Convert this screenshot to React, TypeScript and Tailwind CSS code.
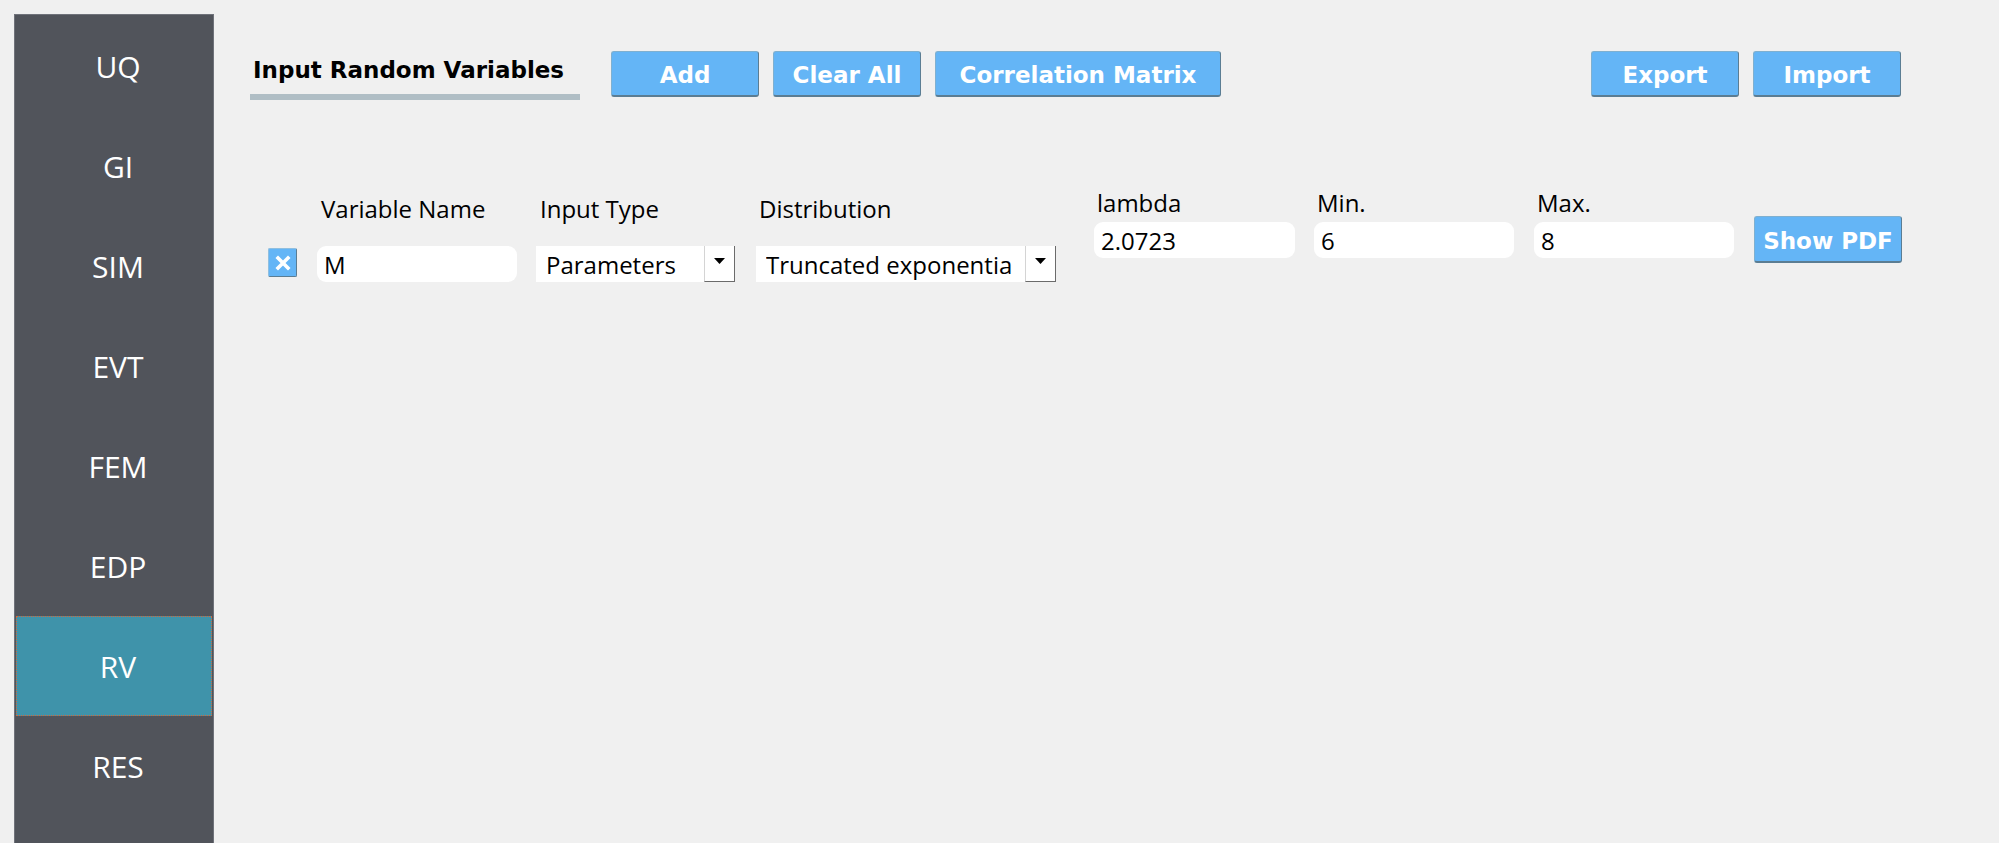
import React from 'react';

const NAV = ['UQ', 'GI', 'SIM', 'EVT', 'FEM', 'EDP', 'RV', 'RES'];

const BlueButton: React.FC<{ label: string; className?: string }> = ({ label, className = '' }) => (
  <button
    className={`h-[46px] w-[148px] shrink-0 rounded-[3px] border border-[#7fb0d0] border-r-[#5b7d93] border-b-2 border-b-[#5b7d93] bg-[#64b5f6] pt-[3px] font-['DejaVu_Sans',sans-serif] text-[23px] font-bold leading-[28px] text-white ${className}`}
  >
    {label}
  </button>
);

const TextField: React.FC<{ value: string; w: string }> = ({ value, w }) => (
  <div className={`${w} h-[36px] rounded-[9px] bg-white pl-[7px] pt-[5px] text-[24px] leading-[28px] text-black`}>
    {value}
  </div>
);

// qt-style combo box: value is clipped before the drop-down button
const Combo: React.FC<{ value: string; w: string }> = ({ value, w }) => (
  <div className={`${w} flex h-[36px] bg-white`}>
    <div className="min-w-0 flex-1 pl-[10px] pr-[12px] pt-[2px]">
      <div className="overflow-hidden whitespace-nowrap text-[24px] leading-[33px] text-black">{value}</div>
    </div>
    <div className="flex w-[31px] shrink-0 justify-center border-r border-b border-l border-r-[#6b6b6b] border-b-[#6b6b6b] border-l-[#d4d4d4] pt-[12px]">
      <svg width="11" height="6" viewBox="0 0 11 6">
        <path d="M0 0 H11 L5.5 6 Z" fill="#000" />
      </svg>
    </div>
  </div>
);

const Labeled: React.FC<{ label: string; gap: string; children: React.ReactNode }> = ({ label, gap, children }) => (
  <div className="flex flex-col">
    <div className="whitespace-nowrap pl-[3px] text-[24px] leading-[28px] text-black">{label}</div>
    <div className={gap}>{children}</div>
  </div>
);

export default function App() {
  return (
    <div className="flex h-[843px] w-full overflow-hidden bg-[#f0f0f0] pl-[14px] pt-[14px] font-['Open_Sans',sans-serif]">
      <nav className="flex w-[200px] shrink-0 flex-col border border-b-0 border-[#6f727a] bg-[#51545b] p-[1px]">
        {NAV.map((n) => (
          <div
            key={n}
            className={`flex h-[100px] items-center justify-center pl-[8px] text-[30px] text-white ${
              n === 'RV' ? 'bg-[#3f93aa] outline-1 outline-dotted outline-[#cf6a3c] -outline-offset-1' : ''
            }`}
          >
            {n}
          </div>
        ))}
      </nav>

      <main className="flex flex-1 flex-col pl-[36px] pr-[96px] pt-[37px]">
        <div className="flex items-start">
          <div className="flex w-[330px] shrink-0 flex-col pt-[5px]">
            <div className="pl-[3px] font-['DejaVu_Sans',sans-serif] text-[23px] font-bold leading-[28px] text-black">
              Input Random Variables
            </div>
            <div className="mt-[10px] h-[6px] bg-[#b0bec5]" />
          </div>
          <div className="ml-[31px] flex shrink-0 gap-[14px]">
            <BlueButton label="Add" />
            <BlueButton label="Clear All" />
            <BlueButton label="Correlation Matrix" className="w-[286px]" />
          </div>
          <div className="flex-1" />
          <div className="mr-[2px] flex shrink-0 gap-[14px]">
            <BlueButton label="Export" />
            <BlueButton label="Import" />
          </div>
        </div>

        <div className="mt-[89px] flex items-start">
          <div className="ml-[18px] mt-[59px] flex h-[29px] w-[29px] shrink-0 items-center justify-center rounded-[2px] border border-[#8fbfe0] border-r-[#5b7d93] border-b-[#5b7d93] bg-[#64b5f6]">
            <svg width="16" height="16" viewBox="0 0 16 16">
              <path d="M3 3 L13 13 M13 3 L3 13" stroke="#fff" strokeWidth="3.6" strokeLinecap="square" />
            </svg>
          </div>

          <div className="ml-[21px] mt-[6px] shrink-0">
            <Labeled label="Variable Name" gap="mt-[23px] -ml-[1px]">
              <TextField value="M" w="w-[200px]" />
            </Labeled>
          </div>
          <div className="ml-[20px] mt-[6px] shrink-0">
            <Labeled label="Input Type" gap="mt-[23px] -ml-[1px]">
              <Combo value="Parameters" w="w-[199px]" />
            </Labeled>
          </div>
          <div className="ml-[21px] mt-[6px] shrink-0">
            <Labeled label="Distribution" gap="mt-[23px]">
              <Combo value="Truncated exponential" w="w-[300px]" />
            </Labeled>
          </div>

          <div className="ml-[38px] shrink-0">
            <Labeled label="lambda" gap="mt-[5px]">
              <TextField value="2.0723" w="w-[201px]" />
            </Labeled>
          </div>
          <div className="ml-[19px] shrink-0">
            <Labeled label="Min." gap="mt-[5px]">
              <TextField value="6" w="w-[200px]" />
            </Labeled>
          </div>
          <div className="ml-[20px] shrink-0">
            <Labeled label="Max." gap="mt-[5px]">
              <TextField value="8" w="w-[200px]" />
            </Labeled>
          </div>
          <div className="ml-[20px] mt-[27px] shrink-0">
            <BlueButton label="Show PDF" className="h-[47px]" />
          </div>
        </div>
      </main>
    </div>
  );
}
